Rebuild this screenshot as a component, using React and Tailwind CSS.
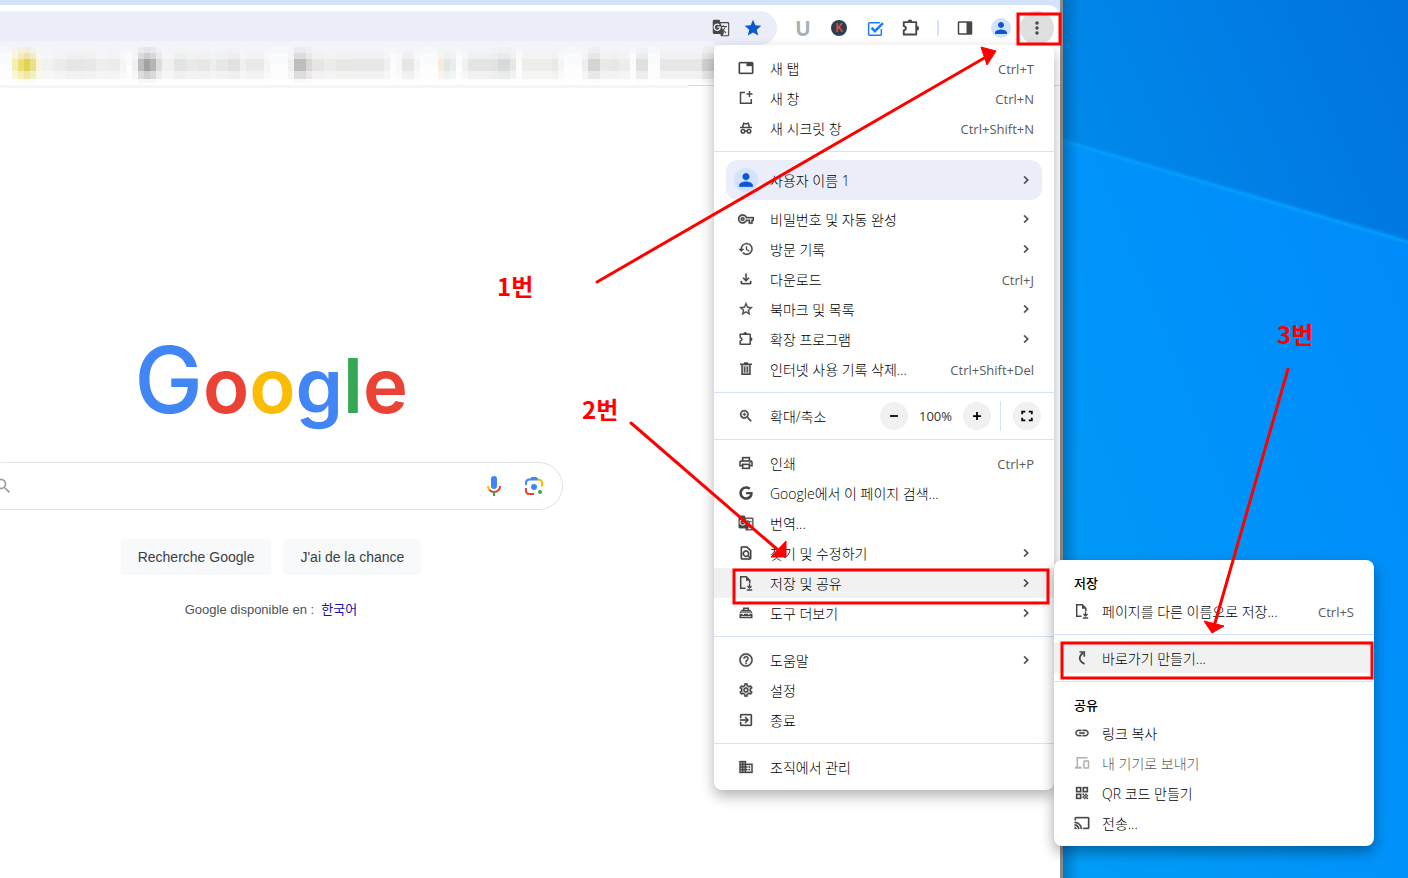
import { IconContext } from "react-icons";
import {
  MdCast,
  MdChevronRight,
  MdDomain,
  MdExitToApp,
  MdGTranslate,
  MdHelpOutline,
  MdHistory,
  MdLink,
  MdMoreVert,
  MdOutlineFileDownload,
  MdOutlineFindInPage,
  MdOutlinePrint,
  MdOutlineSettings,
  MdOutlineVpnKey,
  MdPerson,
  MdQrCode,
  MdSearch,
  MdStar,
  MdStarOutline,
  MdTab,
  MdZoomIn,
} from "react-icons/md";
import { FaGoogle } from "react-icons/fa";

/* Icons missing from the package */
function Svg({ size = 16, children }) {
  return (
    <svg width={size} height={size} viewBox="0 0 16 16" fill="none" stroke="currentColor" strokeWidth="1.5" aria-hidden="true">
      {children}
    </svg>
  );
}

function NewWindowIcon() {
  return (
    <Svg>
      <path d="M7 2.5H2.5v10.8h10.8V9" />
      <path d="M11.500 1v6M8.500 4h6" />
    </Svg>
  );
}

function IncognitoIcon() {
  return (
    <Svg>
      <path d="M2 7.600h12M4.600 7.400l1.100-4.200 2.300.7 2.300-.7 1.100 4.200" />
      <circle cx="5" cy="11.300" r="1.800" />
      <circle cx="11" cy="11.300" r="1.800" />
      <path d="M6.800 11h2.400" />
    </Svg>
  );
}

function PuzzleIcon({ size }) {
  return (
    <Svg size={size}>
      <path d="M2.200 3.300h10v9.900h-10V10c2.300-.5 2.300-3 0-3.500z" strokeLinejoin="round" />
      <path d="M5.300 3a1.900 1.900 0 0 1 3.800 0zM12.600 6.300a1.900 1.900 0 0 1 0 3.800z" fill="currentColor" stroke="none" />
    </Svg>
  );
}

function TrashIcon() {
  return (
    <Svg>
      <path d="M4 4v9.300h8V4" fill="#c4c4c4" />
      <path d="M2 3.200h12M6 2h4" />
      <path d="M6.700 5.500v6M9.300 5.500v6" strokeWidth="1.200" />
    </Svg>
  );
}

function ToolboxIcon() {
  return (
    <Svg>
      <path d="M5.700 5V3.200h4.600V5" />
      <path d="M3.500 4.800h9L14.500 8H1.500z" fill="currentColor" stroke="none" />
      <path d="M1.500 8.700h3v1h1.500v-1h4v1h1.500v-1h3v4.600h-13z" fill="currentColor" stroke="none" />
      <path d="M3 7h10M3 11.500h10" stroke="#ffffff" strokeWidth="0.700" />
    </Svg>
  );
}

function SaveFileIcon() {
  return (
    <Svg>
      <path d="M7.500 13.300H2.700V1.700h5.600l3.500 3.500v3" />
      <path d="M8 1.700v4h4z" fill="currentColor" stroke="none" />
      <path d="M11.500 8.500v4.300M9.400 11l2.100 2 2.100-2M8.800 15h5.400" strokeWidth="1.300" />
    </Svg>
  );
}

function ShortcutIcon() {
  return (
    <Svg>
      <path d="M10.500 14C4.500 11 4.200 6.500 9.200 2.800" strokeWidth="1.700" />
      <path d="M5.500 2h4.800v4.800" strokeWidth="1.700" />
    </Svg>
  );
}

function DevicesIcon() {
  return (
    <Svg>
      <path d="M13.500 2.700H3.300v9.500" />
      <path d="M1 12.700h6.500" strokeWidth="2" />
      <rect x="10" y="6" width="4.500" height="7" rx="0.500" />
    </Svg>
  );
}

function TaskIcon() {
  return (
    <Svg size={17}>
      <path d="M13.500 8.500v5a.8.800 0 0 1-.8.800H2.300a.8.800 0 0 1-.8-.8V3.300a.8.800 0 0 1 .8-.8H12" strokeWidth="1.400" />
      <path d="M4.300 7.300l3.200 3.200 7.500-7.500" strokeWidth="2.400" />
    </Svg>
  );
}

function SidePanelIcon() {
  return (
    <Svg>
      <rect x="1.500" y="2" width="13" height="12" rx="0.500" />
      <path d="M9.500 2h5v12h-5z" fill="currentColor" stroke="none" />
    </Svg>
  );
}

function FullscreenIcon() {
  return (
    <Svg size={14}>
      <path d="M2.500 6V3h3.500M10 3h3.500v3M13.500 10v3H10M6 13H2.500v-3" strokeWidth="2" />
    </Svg>
  );
}

function MicIcon() {
  return (
    <svg width="24" height="24" viewBox="0 0 24 24" fill="none" aria-hidden="true">
      <rect x="9" y="2" width="6" height="13" rx="3" fill="#4285f4" />
      <path d="M6 12c0 1.900.7 3.200 1.700 4.300" stroke="#fbbc04" strokeWidth="2" />
      <path d="M7.300 16c2.500 2.500 6.900 2.500 9.400 0 .9-1 1.300-2.300 1.300-4" stroke="#ea4335" strokeWidth="2" />
      <path d="M12 18v4" stroke="#34a853" strokeWidth="2" />
    </svg>
  );
}

function LensIcon() {
  return (
    <svg width="24" height="24" viewBox="0 0 24 24" fill="none" strokeWidth="2" aria-hidden="true">
      <path d="M4 11V9c0-2 1.300-3.500 3.500-3.500H16" stroke="#4285f4" />
      <path d="M8 5.500 9.500 3h5L16 5.500z" fill="#4285f4" />
      <path d="M16 5.500c3 0 4 1.500 4 3.500v3.500" stroke="#fbbc04" />
      <path d="M4 14v2.500C4 19 5.300 20 7.500 20H12" stroke="#ea4335" />
      <circle cx="12" cy="13" r="3" fill="#4285f4" />
      <circle cx="18" cy="18" r="2" fill="#34a853" />
    </svg>
  );
}

const groupes = [
  [
    { icon: <MdTab size={16} />, label: "새 탭", keys: "Ctrl+T" },
    { icon: <NewWindowIcon />, label: "새 창", keys: "Ctrl+N" },
    { icon: <IncognitoIcon />, label: "새 시크릿 창", keys: "Ctrl+Shift+N" },
  ],
  [
    { icon: <MdOutlineVpnKey size={16} />, label: "비밀번호 및 자동 완성", sub: true },
    { icon: <MdHistory size={16} />, label: "방문 기록", sub: true },
    { icon: <MdOutlineFileDownload size={16} />, label: "다운로드", keys: "Ctrl+J" },
    { icon: <MdStarOutline size={16} />, label: "북마크 및 목록", sub: true },
    { icon: <PuzzleIcon />, label: "확장 프로그램", sub: true },
    { icon: <TrashIcon />, label: "인터넷 사용 기록 삭제...", keys: "Ctrl+Shift+Del" },
  ],
  [
    { icon: <MdOutlinePrint size={16} />, label: "인쇄", keys: "Ctrl+P" },
    { icon: <FaGoogle size={14} />, label: "Google에서 이 페이지 검색..." },
    { icon: <MdGTranslate size={16} />, label: "번역..." },
    { icon: <MdOutlineFindInPage size={16} />, label: "찾기 및 수정하기", sub: true },
    { icon: <SaveFileIcon />, label: "저장 및 공유", sub: true, active: true },
    { icon: <ToolboxIcon />, label: "도구 더보기", sub: true },
  ],
  [
    { icon: <MdHelpOutline size={16} />, label: "도움말", sub: true },
    { icon: <MdOutlineSettings size={16} />, label: "설정" },
    { icon: <MdExitToApp size={16} />, label: "종료" },
  ],
  [{ icon: <MdDomain size={16} />, label: "조직에서 관리" }],
];

const partage = [
  { icon: <MdLink size={16} />, label: "링크 복사" },
  { icon: <DevicesIcon />, label: "내 기기로 보내기", disabled: true },
  { icon: <MdQrCode size={16} />, label: "QR 코드 만들기" },
  { icon: <MdCast size={16} />, label: "전송..." },
];

function MenuItem({ item, compact }) {
  return (
    <button
      type="button"
      disabled={item.disabled}
      className={`flex h-[30px] w-full items-center pr-5 text-left ${compact ? "gap-3 pl-5" : "gap-4 pl-6"} ${
        item.active ? "bg-[#f1f1f1]" : ""
      } ${item.disabled ? "text-[#5a5a5a]" : "text-black"}`}
    >
      <span className={`flex w-4 justify-center ${item.disabled ? "text-[#b0b0b0]" : "text-[#474747]"}`}>{item.icon}</span>
      <span className="flex-1 pt-0.5 whitespace-nowrap">{item.label}</span>
      {item.keys && <span className="pt-0.5 text-[13px] font-normal text-[#5a5a5a]">{item.keys}</span>}
      {item.sub && <MdChevronRight size={16} className="text-[#474747]" />}
    </button>
  );
}

function Divider() {
  return <hr className="my-2 border-t border-[#d3e3fd]" />;
}

function Group({ items }) {
  return items.map((item) => <MenuItem key={item.label} item={item} />);
}

function Submenu() {
  return (
    <div className="absolute top-[515px] left-full w-80 rounded-lg bg-white py-2 shadow-[0_6px_14px_rgba(0,0,0,0.35)]">
      <h2 className="flex h-7 items-center px-5 pt-0.5 text-[13px] font-medium">저장</h2>
      <MenuItem compact item={{ icon: <SaveFileIcon />, label: "페이지를 다른 이름으로 저장...", keys: "Ctrl+S" }} />
      <Divider />
      <MenuItem compact item={{ icon: <ShortcutIcon />, label: "바로가기 만들기...", active: true }} />
      <Divider />
      <h2 className="flex h-7 items-center px-5 pt-0.5 text-[13px] font-medium">공유</h2>
      {partage.map((item) => (
        <MenuItem key={item.label} compact item={item} />
      ))}
    </div>
  );
}

function ChromeMenu() {
  return (
    <IconContext.Provider value={{ attr: { strokeWidth: 0.5 } }}>
      <div className="absolute top-[45px] right-[6px] z-10 w-[340px] rounded-lg bg-white py-2 font-['Open_Sans','Noto_Sans_CJK_KR',sans-serif] text-[14px] leading-5 font-light text-black shadow-[0_6px_14px_rgba(0,0,0,0.3)] [&_path[fill=none]]:stroke-none">
        <Group items={groupes[0]} />
        <Divider />
        <div className="mb-1 px-3">
          <button type="button" className="flex h-10 w-full items-center gap-3 rounded-xl bg-[#ebeef8] px-2 text-left">
            <span className="flex h-6 w-6 items-center justify-center rounded-full bg-[#d3e3fd] text-[#0b57d0]">
              <MdPerson size={20} />
            </span>
            <span className="flex-1 pt-0.5">사용자 이름 1</span>
            <MdChevronRight size={16} className="text-[#474747]" />
          </button>
        </div>
        <Group items={groupes[1]} />
        <Divider />
        <div className="flex h-[30px] items-center pr-[13px] pl-6">
          <MdZoomIn size={16} className="mr-4 text-[#474747]" />
          <span className="flex-1 pt-0.5">확대/축소</span>
          <button type="button" aria-label="축소" className="flex h-7 w-7 items-center justify-center rounded-full bg-[#f1f1f1]">
            <Svg size={14}>
              <path d="M3.500 8h9" strokeWidth="2" />
            </Svg>
          </button>
          <span className="w-[55px] text-center text-[13px] font-normal text-[#333333]">100%</span>
          <button type="button" aria-label="확대" className="flex h-7 w-7 items-center justify-center rounded-full bg-[#f1f1f1]">
            <Svg size={14}>
              <path d="M3.500 8h9M8 3.500v9" strokeWidth="2" />
            </Svg>
          </button>
          <span className="mr-3 ml-[9px] h-[30px] w-px bg-[#d3e3fd]" />
          <button type="button" aria-label="전체화면" className="flex h-7 w-7 items-center justify-center rounded-full bg-[#f1f1f1]">
            <FullscreenIcon />
          </button>
        </div>
        <Divider />
        <Group items={groupes[2]} />
        <Divider />
        <Group items={groupes[3]} />
        <Divider />
        <Group items={groupes[4]} />
        <Submenu />
      </div>
    </IconContext.Provider>
  );
}

function ToolButton({ label, children }) {
  return (
    <button type="button" aria-label={label} className="flex h-[34px] w-9 shrink-0 items-center justify-center text-[#474747]">
      {children}
    </button>
  );
}

function Toolbar() {
  return (
    <header className="bg-[#d3e3fd] pt-[5px]">
      <div className="flex h-10 items-center rounded-tr-xl bg-white pt-1.5 pr-[5px]">
        <div className="mr-2 flex h-[34px] flex-1 items-center rounded-r-full bg-[#ebeef8] pr-2">
          <input type="text" aria-label="주소창" className="min-w-0 flex-1 bg-transparent px-4 text-sm outline-none" />
          <button type="button" aria-label="번역" className="flex w-8 justify-center text-[#474747]">
            <MdGTranslate size={18} />
          </button>
          <button type="button" aria-label="북마크" className="flex w-8 justify-center text-[#0b57d0]">
            <MdStar size={20} />
          </button>
        </div>
        <ToolButton label="확장 U">
          <span className="font-['Lato',sans-serif] text-[20px] leading-5 font-black text-[#a3b1b3]">U</span>
        </ToolButton>
        <ToolButton label="확장 K">
          <span className="flex h-4 w-4 items-center justify-center rounded-full bg-[#2c3e50] font-['Roboto',sans-serif] text-[12px] leading-4 font-medium text-[#e74c3c]">
            K
          </span>
        </ToolButton>
        <ToolButton label="할 일">
          <span className="text-[#1a7cf9]">
            <TaskIcon />
          </span>
        </ToolButton>
        <ToolButton label="확장 프로그램">
          <PuzzleIcon size={20} />
        </ToolButton>
        <span className="mx-2 h-4 w-0.5 shrink-0 bg-[#d3e3fd]" />
        <ToolButton label="측면 패널">
          <SidePanelIcon />
        </ToolButton>
        <ToolButton label="프로필">
          <span className="flex h-5 w-5 items-center justify-center rounded-full bg-[#d3e3fd] text-[#0b57d0]">
            <MdPerson size={18} />
          </span>
        </ToolButton>
        <ToolButton label="메뉴">
          <span className="flex h-[34px] w-[34px] items-center justify-center rounded-full bg-[#dfdfdf]">
            <MdMoreVert size={20} />
          </span>
        </ToolButton>
      </div>
    </header>
  );
}

// [x, width, colour] of each pixelated column in the bookmarks bar
const mosaique = [
  [12, 6, "#f5efb4"], [18, 6, "#ecdf78"], [24, 6, "#e4d250"], [30, 6, "#ebe08a"], [36, 6, "#f8f5dc"],
  [42, 12, "#f0f1f1"], [54, 12, "#ebebeb"], [66, 18, "#e7e5e5"], [84, 12, "#e9e8e8"], [96, 12, "#eeeeee"], [108, 12, "#ebebeb"], [120, 6, "#f6f6f6"],
  [132, 6, "#f1f1f1"], [138, 6, "#bcbcbc"], [144, 6, "#a2a2a2"], [150, 6, "#b5b5b5"], [156, 6, "#dcdcdc"], [162, 12, "#f0f0f0"],
  [174, 12, "#e2e4e3"], [186, 12, "#e8e9e8"], [198, 12, "#e7e7e6"], [210, 6, "#eeeeee"], [216, 12, "#e6e7e7"], [228, 12, "#e1e1e2"], [240, 6, "#f0f0f0"],
  [246, 18, "#e9e9e9"], [264, 6, "#f6f6f6"], [288, 6, "#efefef"], [294, 12, "#bebebe"], [306, 6, "#d9d6d6"],
  [312, 12, "#e9e5e5"], [324, 12, "#ececec"], [336, 12, "#e7e7e6"], [348, 36, "#e8e8e8"], [384, 6, "#f0f0f0"], [396, 6, "#f7f7f7"],
  [402, 12, "#e6e6e6"], [414, 6, "#f5f5f5"], [438, 6, "#f7ebe0"], [444, 6, "#e2e8df"], [450, 6, "#e6eeee"], [462, 6, "#f1f1f1"],
  [468, 24, "#e3e5e4"], [492, 6, "#e2e2e2"], [498, 12, "#d8dad9"], [510, 6, "#e7e7e7"], [522, 30, "#ededea"], [552, 6, "#e8e9e5"], [558, 6, "#f5f5f5"],
  [582, 6, "#eeeeee"], [588, 12, "#d4d4d4"], [600, 12, "#eae9e7"], [612, 6, "#e6e7e5"], [618, 12, "#ececec"], [636, 12, "#e0e0df"],
  [660, 42, "#e7e7e7"], [702, 12, "#d2d2d2"],
];

function BookmarksBar() {
  return (
    <nav aria-label="북마크바" className="relative -mt-1 h-11 overflow-hidden">
      <svg width="714" height="44" shapeRendering="crispEdges" aria-hidden="true">
        <rect width="714" height="44" fill="#ffffff" />
        <rect width="714" height="6" fill="#f3f4fa" />
        <rect y="6" width="714" height="6" fill="#f6f7fb" />
        <rect y="12" width="714" height="12" fill="#fafbfd" />
        <rect y="24" width="714" height="14" fill="#fdfdfd" />
        {mosaique.map(([x, w, fill]) => (
          <g key={x} fill={fill}>
            <rect x={x} y="6" width={w} height="6" opacity="0.2" />
            <rect x={x} y="12" width={w} height="6" opacity="0.5" />
            <rect x={x} y="18" width={w} height="12" />
            <rect x={x} y="30" width={w} height="8" opacity="0.5" />
            <rect x={x} y="38" width={w} height="4" opacity="0.1" />
          </g>
        ))}
      </svg>
    </nav>
  );
}

function GooglePage() {
  return (
    <main className="-ml-[21px] flex w-[584px] flex-col items-center pt-[237px] font-['Liberation_Sans','Noto_Sans_CJK_KR',sans-serif]">
      <h1 className="flex h-[110px] items-baseline font-['Inter',sans-serif] text-[76px] leading-[110px] font-semibold">
        <span className="text-[92px] font-medium text-[#4285f4]">G</span>
        <span className="text-[#ea4335]">o</span>
        <span className="text-[#fbbc05]">o</span>
        <span className="text-[#4285f4]">g</span>
        <span className="text-[#34a853]">l</span>
        <span className="text-[#ea4335]">e</span>
      </h1>
      <form className="mt-[27px] flex h-12 w-full items-center rounded-full border border-[#dfe1e5] bg-white pr-4 pl-[13px]">
        <MdSearch size={20} className="text-[#9aa0a6]" />
        <input type="text" aria-label="Rechercher" className="min-w-0 flex-1 bg-transparent px-3 text-base outline-none" />
        <button type="button" aria-label="Recherche vocale" className="mr-4">
          <MicIcon />
        </button>
        <button type="button" aria-label="Recherche par image">
          <LensIcon />
        </button>
      </form>
      <div className="mt-[29px] flex gap-3 text-[14px] text-[#3c4043]">
        <button type="button" className="h-9 rounded bg-[#f8f9fa] px-[17px]">Recherche Google</button>
        <button type="button" className="h-9 rounded bg-[#f8f9fa] px-[17px]">J'ai de la chance</button>
      </div>
      <p className="mt-[25px] text-[13px] leading-5 text-[#4d5156]">
        Google disponible en : &nbsp;
        <a href="#ko" className="text-[#1a0dab]">한국어</a>
      </p>
    </main>
  );
}

function Desktop() {
  return (
    <aside className="w-[345px] shrink-0">
      <svg className="block h-full w-full" viewBox="0 0 345 878" preserveAspectRatio="none" aria-hidden="true">
        <defs>
          <linearGradient id="sky" x1="0" y1="0.3" x2="1" y2="0">
            <stop offset="0" stopColor="#0088ea" />
            <stop offset="1" stopColor="#0073df" />
          </linearGradient>
          <linearGradient id="light" x1="0" y1="1" x2="1" y2="0">
            <stop offset="0" stopColor="#009df6" />
            <stop offset="0.5" stopColor="#0092fa" />
            <stop offset="1" stopColor="#0088fc" />
          </linearGradient>
          <linearGradient id="edge">
            <stop offset="0" stopColor="#003a60" stopOpacity="0.35" />
            <stop offset="1" stopColor="#003a60" stopOpacity="0" />
          </linearGradient>
        </defs>
        <rect width="345" height="878" fill="url(#light)" />
        <path d="M0 0h345v242L0 141z" fill="url(#sky)" />
        <path d="M0 141l345 101" stroke="#009bff" strokeWidth="7" opacity="0.35" />
        <path d="M0 141l345 101" stroke="#08a2ff" strokeWidth="3" opacity="0.6" />
        <rect width="16" height="878" fill="url(#edge)" />
      </svg>
    </aside>
  );
}

/* Numbered steps drawn over the screen */
function Annotations() {
  return (
    <svg className="pointer-events-none absolute top-0 right-0 z-20" width="1408" height="878" viewBox="0 0 1408 878" fill="none">
      <g stroke="#ff0000" strokeWidth="3">
        <rect x="1018" y="14" width="42" height="30" />
        <rect x="734" y="570" width="314" height="33" />
        <rect x="1062" y="643" width="310" height="35" />
        <path d="M597 282 986 57M631 423l147 127M1288 369l-73 254" strokeLinecap="round" />
      </g>
      <path d="M981 47l15 4-9 14zM771 557l15 0 0-16zM1204 621l20 5-12 7z" fill="#ff0000" stroke="#ff0000" />
      <g fill="#ff0000" className="font-['Noto_Sans_CJK_KR',sans-serif] text-[24px] font-bold">
        <text x="497" y="296">1번</text>
        <text x="582" y="419">2번</text>
        <text x="1277" y="344">3번</text>
      </g>
    </svg>
  );
}

export default function App() {
  return (
    <div className="relative flex min-h-screen overflow-hidden bg-white">
      <div className="relative min-w-0 flex-1 border-r-[3px] border-[#8a8a8a] bg-white">
        <Toolbar />
        <BookmarksBar />
        <div className="flex h-[3px] items-start">
          <span className="h-[3px] w-[688px] bg-[#f5f5f5]" />
          <span className="h-px flex-1 bg-[#dadada]" />
        </div>
        <GooglePage />
        <ChromeMenu />
      </div>
      <Desktop />
      <Annotations />
    </div>
  );
}
